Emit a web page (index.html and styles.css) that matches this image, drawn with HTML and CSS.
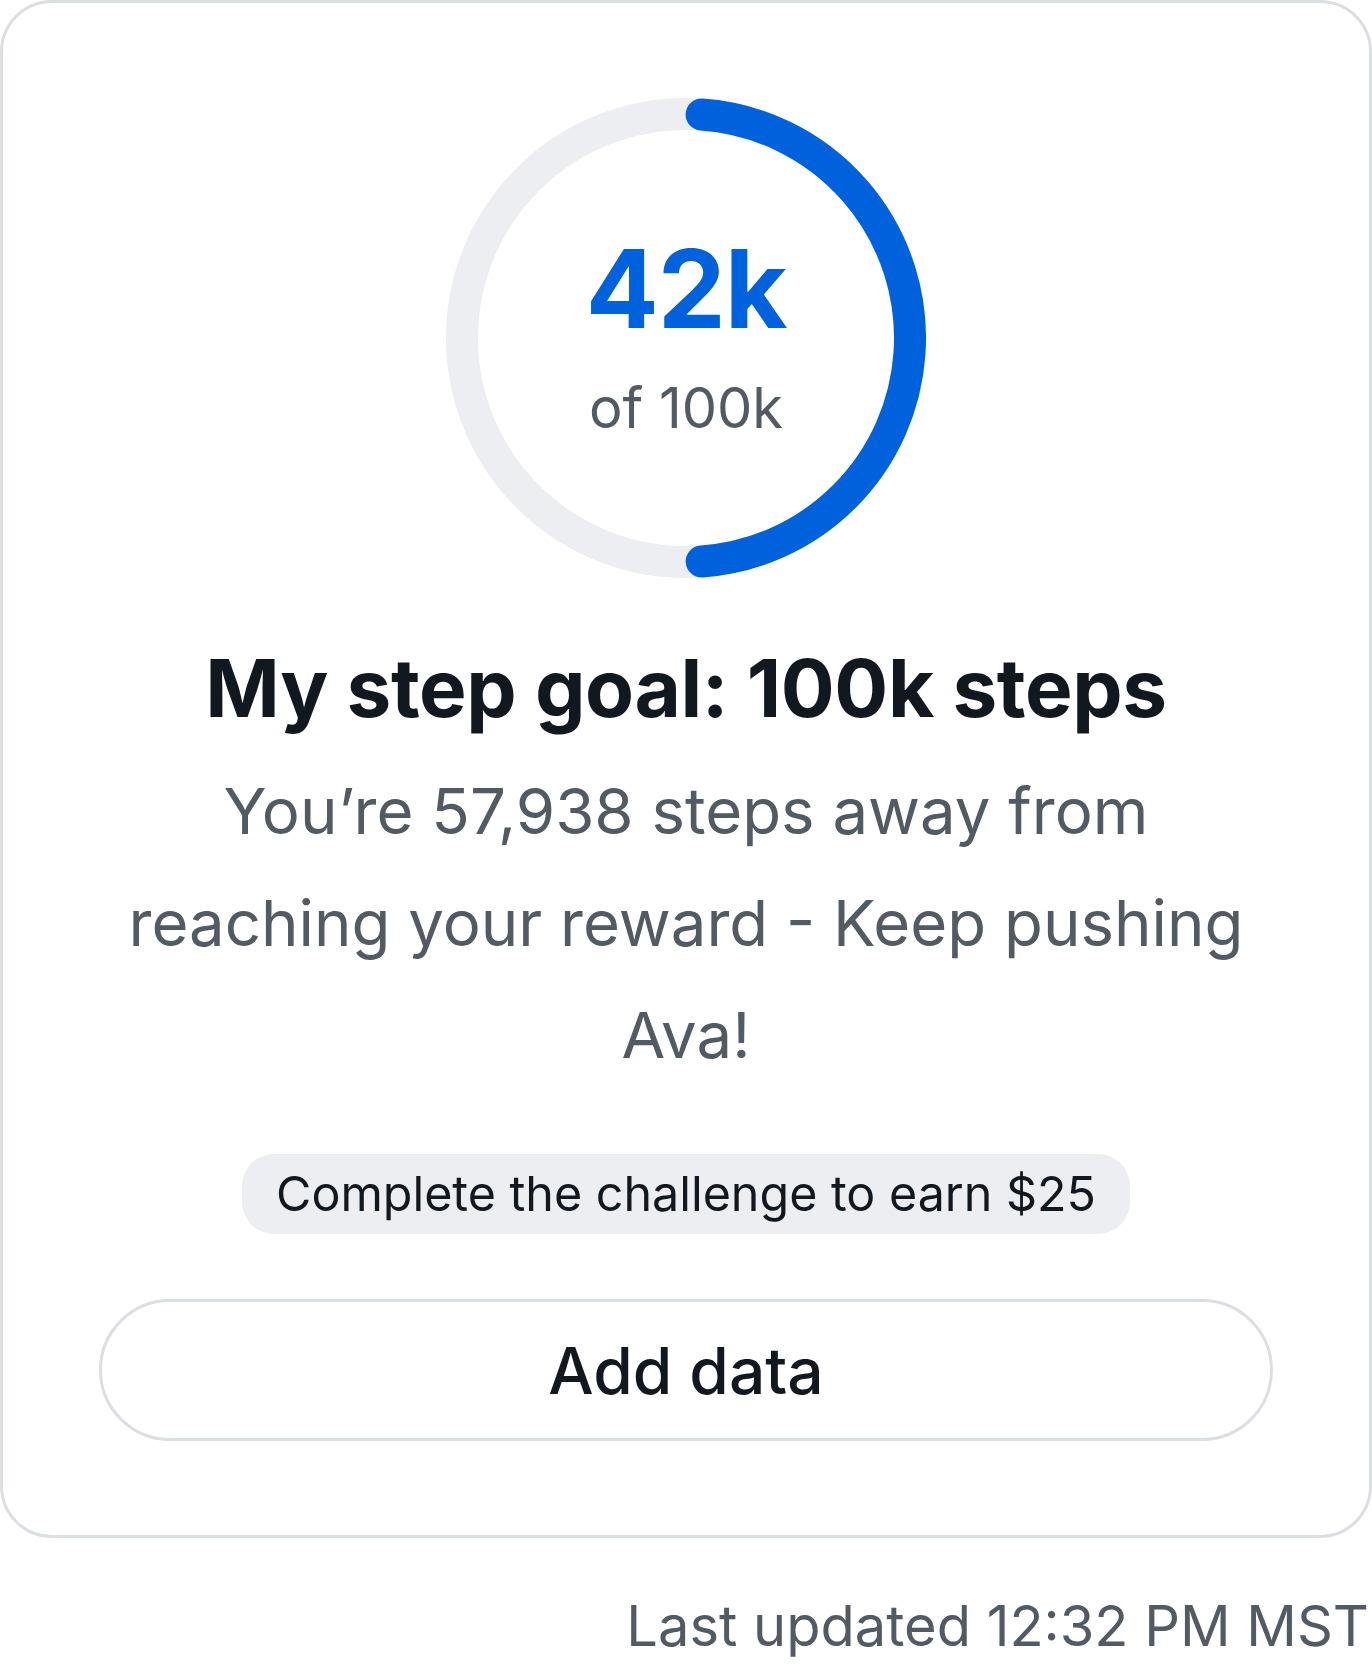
FILE: index.html
```html
<!DOCTYPE html>
<html lang="en">
<head>
<meta charset="utf-8">
<title>Step goal</title>
<link rel="stylesheet" href="styles.css">
</head>
<body>
<main class="page">
  <section class="card">
    <div class="ring">
      <svg class="ring-svg" viewBox="0 0 480 480" width="480" height="480" aria-hidden="true">
        <circle cx="240" cy="240" r="224" fill="none" stroke="#edeef2" stroke-width="32"/>
        <circle cx="240" cy="240" r="224" fill="none" stroke="#0061dc" stroke-width="32" stroke-linecap="round" stroke-dasharray="672 1407.4" transform="rotate(-86 240 240)"/>
      </svg>
      <div class="ring-text">
        <div class="ring-value">42k</div>
        <div class="ring-total">of 100k</div>
      </div>
    </div>
    <h1 class="title">My step goal: 100k steps</h1>
    <p class="message">You’re 57,938 steps away from reaching your reward - Keep pushing Ava!</p>
    <div class="badge">Complete the challenge to earn $25</div>
    <button class="action" type="button">Add data</button>
  </section>
  <p class="updated">Last updated 12:32 PM MST</p>
</main>
</body>
</html>
```
FILE: styles.css
```css
html, body {
  margin: 0;
  padding: 0;
  background: #ffffff;
}

body {
  font-family: Inter, "Noto Sans", "Liberation Sans", sans-serif;
  color: #111820;
}

.page {
  display: flex;
  flex-direction: column;
  width: 1372px;
}

.card {
  box-sizing: border-box;
  width: 1372px;
  border: 3px solid #dbdee3;
  border-radius: 52px;
  padding: 95px 96px 94px;
  display: flex;
  flex-direction: column;
  align-items: center;
}

.ring {
  display: grid;
  width: 480px;
  height: 480px;
  place-items: center;
}

.ring-svg,
.ring-text {
  grid-area: 1 / 1;
}

.ring-svg {
  display: block;
}

.ring-text {
  display: flex;
  flex-direction: column;
  align-items: center;
}

.ring-value {
  font-size: 108px;
  line-height: 108px;
  font-weight: 700;
  color: #0061dc;
  letter-spacing: -1px;
}

.ring-total {
  margin-top: 32px;
  font-size: 56px;
  line-height: 67px;
  color: #525a63;
}

.title {
  margin: 60px 0 0;
  font-size: 80px;
  line-height: 100px;
  font-weight: 700;
  color: #111820;
  text-align: center;
  letter-spacing: -0.4px;
}

.message {
  margin: 17px 0 0;
  width: 1176px;
  font-size: 63.5px;
  line-height: 112px;
  color: #525a63;
  text-align: center;
}

.badge {
  margin-top: 63px;
  padding: 0 34px;
  height: 80px;
  line-height: 80px;
  border-radius: 32px;
  background: #edeef2;
  font-size: 48.4px;
  color: #111820;
}

.action {
  margin-top: 65px;
  box-sizing: border-box;
  width: 1174px;
  height: 142px;
  border: 3px solid #dbdee3;
  border-radius: 71px;
  background: #ffffff;
  font-family: inherit;
  font-size: 64px;
  font-weight: 500;
  color: #111820;
}

.updated {
  margin: 55px 3px 0 0;
  align-self: flex-end;
  font-size: 56px;
  line-height: 67px;
  color: #525a63;
}
```
